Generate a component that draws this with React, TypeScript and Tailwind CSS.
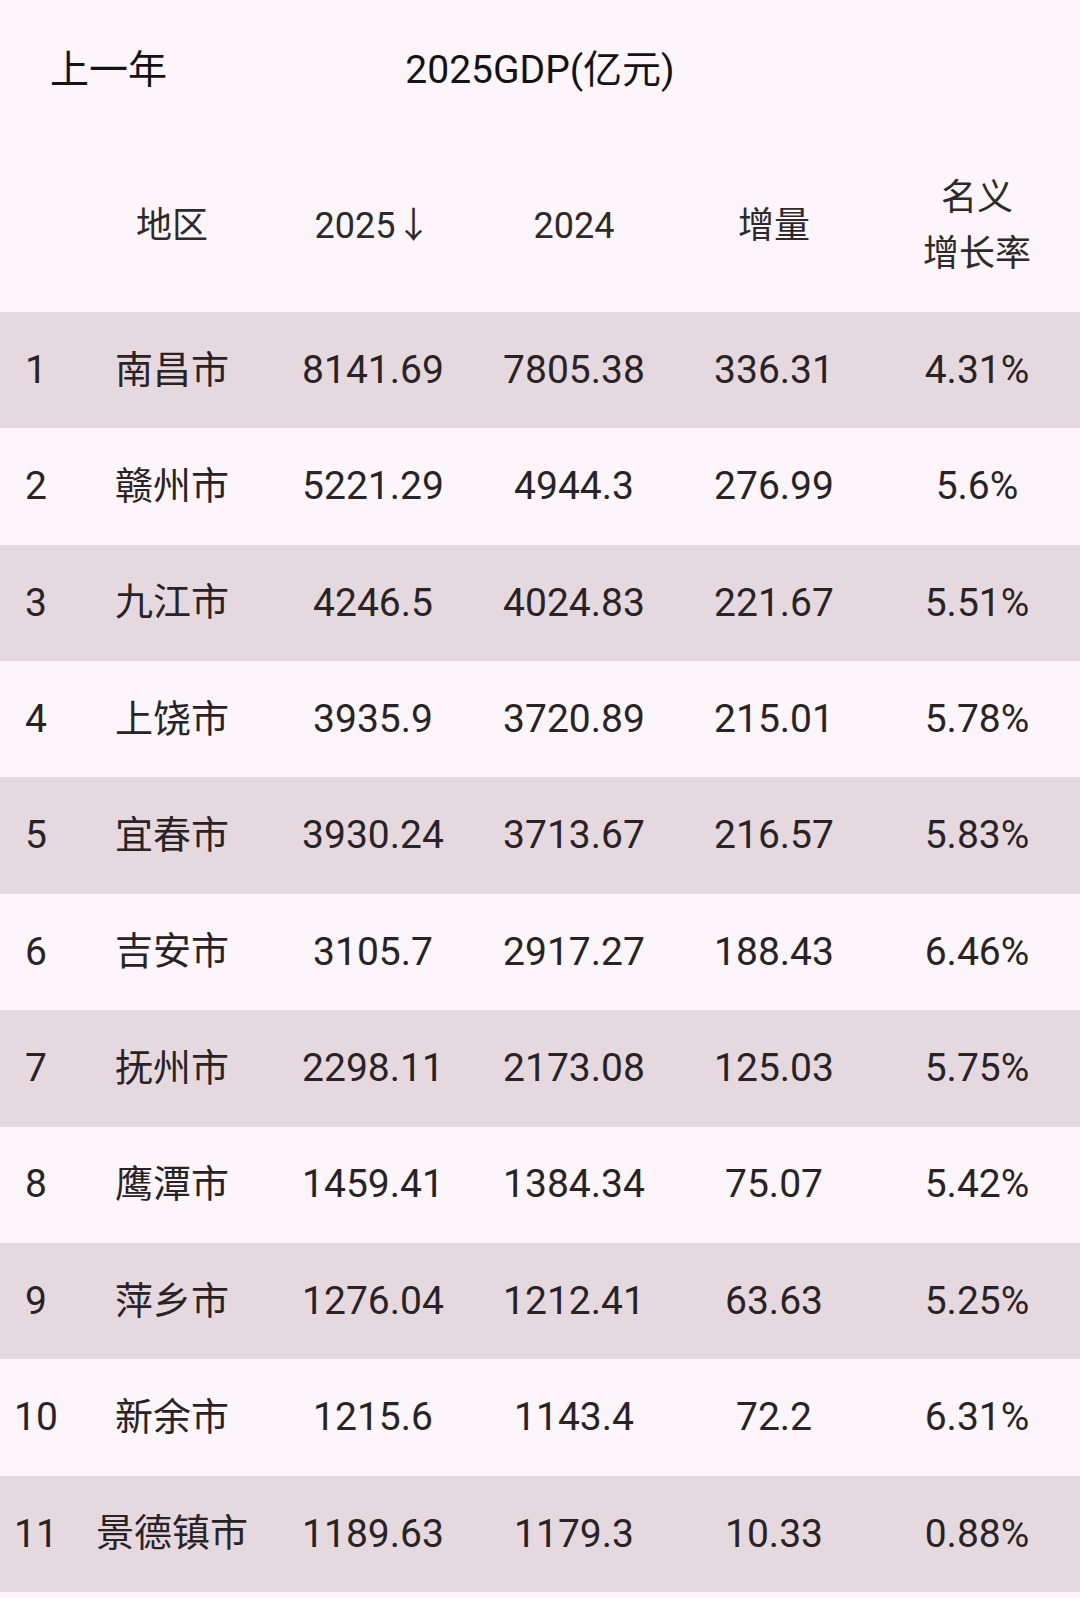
const rows = [
  ["1", "南昌市", "8141.69", "7805.38", "336.31", "4.31%"],
  ["2", "赣州市", "5221.29", "4944.3", "276.99", "5.6%"],
  ["3", "九江市", "4246.5", "4024.83", "221.67", "5.51%"],
  ["4", "上饶市", "3935.9", "3720.89", "215.01", "5.78%"],
  ["5", "宜春市", "3930.24", "3713.67", "216.57", "5.83%"],
  ["6", "吉安市", "3105.7", "2917.27", "188.43", "6.46%"],
  ["7", "抚州市", "2298.11", "2173.08", "125.03", "5.75%"],
  ["8", "鹰潭市", "1459.41", "1384.34", "75.07", "5.42%"],
  ["9", "萍乡市", "1276.04", "1212.41", "63.63", "5.25%"],
  ["10", "新余市", "1215.6", "1143.4", "72.2", "6.31%"],
  ["11", "景德镇市", "1189.63", "1179.3", "10.33", "0.88%"],
];

const cols = "grid grid-cols-[72px_200px_202px_200px_200px_206px]";

export default function App() {
  return (
    <div
      className="w-[1080px] min-h-[1598px] bg-[#fcf6fa] text-[#2a2326]"
      style={{ fontFamily: "Roboto, 'Noto Sans CJK SC', sans-serif" }}
    >
      <div className="relative h-[140px] flex items-center justify-center text-[39px] text-[#141214]">
        <div className="absolute left-[50px] top-0 h-full flex items-center">上一年</div>
        <div>2025GDP(亿元)</div>
      </div>

      <div className={`${cols} h-[172px] items-center text-[36px] text-[#2e2a2c]`}>
        <div />
        <div className="text-center">地区</div>
        <div className="text-center">2025↓</div>
        <div className="text-center">2024</div>
        <div className="text-center">增量</div>
        <div className="text-center leading-[56px]">
          名义
          <br />
          增长率
        </div>
      </div>

      {rows.map((r, i) => (
        <div
          key={r[0]}
          className={`${cols} h-[116.36px] items-center text-[39px] ${i % 2 === 0 ? "bg-[#e5d9df]" : "bg-[#fcf6fa]"}`}
        >
          {r.map((c, j) => (
            <div key={j} className={`text-center whitespace-nowrap ${j === 1 ? "text-[38px]" : ""}`}>
              {c}
            </div>
          ))}
        </div>
      ))}
    </div>
  );
}
